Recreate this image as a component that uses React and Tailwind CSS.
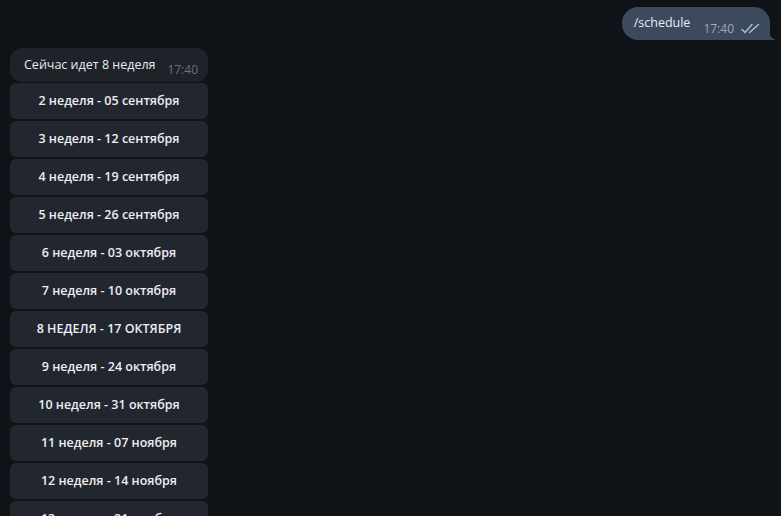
import React from "react";

const weeks = [
  "2 неделя - 05 сентября",
  "3 неделя - 12 сентября",
  "4 неделя - 19 сентября",
  "5 неделя - 26 сентября",
  "6 неделя - 03 октября",
  "7 неделя - 10 октября",
  "8 НЕДЕЛЯ - 17 ОКТЯБРЯ",
  "9 неделя - 24 октября",
  "10 неделя - 31 октября",
  "11 неделя - 07 ноября",
  "12 неделя - 14 ноября",
  "13 неделя - 21 ноября",
];

export default function App() {
  return (
    <div
      className="w-[781px] h-[516px] overflow-hidden bg-[#0f1216] text-[12.5px]"
      style={{ fontFamily: '"Open Sans", "Noto Sans", sans-serif' }}
    >
      <div className="flex justify-end pt-[7px] pr-[11px]">
        <div className="relative">
          <div className="flex items-end h-[33px] pl-[12px] pr-[10px] rounded-[16px] rounded-br-none bg-[#3d495c]">
            <span className="text-[#e7eefb] leading-[18px] mb-[8px]">/schedule</span>
            <span className="ml-[13px] text-[12px] text-[#9aa8bd] leading-[14px] mb-[4px]">17:40</span>
            <svg className="ml-[7px] mb-[6px]" width="19" height="11" viewBox="0 0 19 11" fill="none">
              <path d="M1 6.5 L4 9.5 L11 1.5" stroke="#a9c3e8" strokeWidth="1.4" strokeLinecap="round" strokeLinejoin="round" />
              <path d="M8.5 9.5 L17.5 1.5" stroke="#a9c3e8" strokeWidth="1.4" strokeLinecap="round" />
            </svg>
          </div>
          <svg className="absolute bottom-0 right-[-6px]" width="7" height="10" viewBox="0 0 7 10">
            <path d="M0 0 C0 5 2 8 7 10 L0 10 Z" fill="#3d495c" />
          </svg>
        </div>
      </div>

      <div className="pl-[10px] pt-[8px] w-[208px]">
        <div className="flex items-end justify-between h-[34px] pl-[14px] pr-[10px] rounded-[12px] bg-[#1e2229]">
          <span className="text-[#e9ebee] leading-[18px] mb-[8px]">Сейчас идет 8 неделя</span>
          <span className="text-[12px] text-[#6c737d] leading-[14px] mb-[5px]">17:40</span>
        </div>
        <div className="flex flex-col gap-[2px] mt-[1px]">
          {weeks.map((w) => (
            <div
              key={w}
              className="h-[36px] shrink-0 flex items-center justify-center rounded-[6px] bg-[#22262f] text-[#eceef2] font-semibold"
            >
              {w}
            </div>
          ))}
        </div>
      </div>
    </div>
  );
}
